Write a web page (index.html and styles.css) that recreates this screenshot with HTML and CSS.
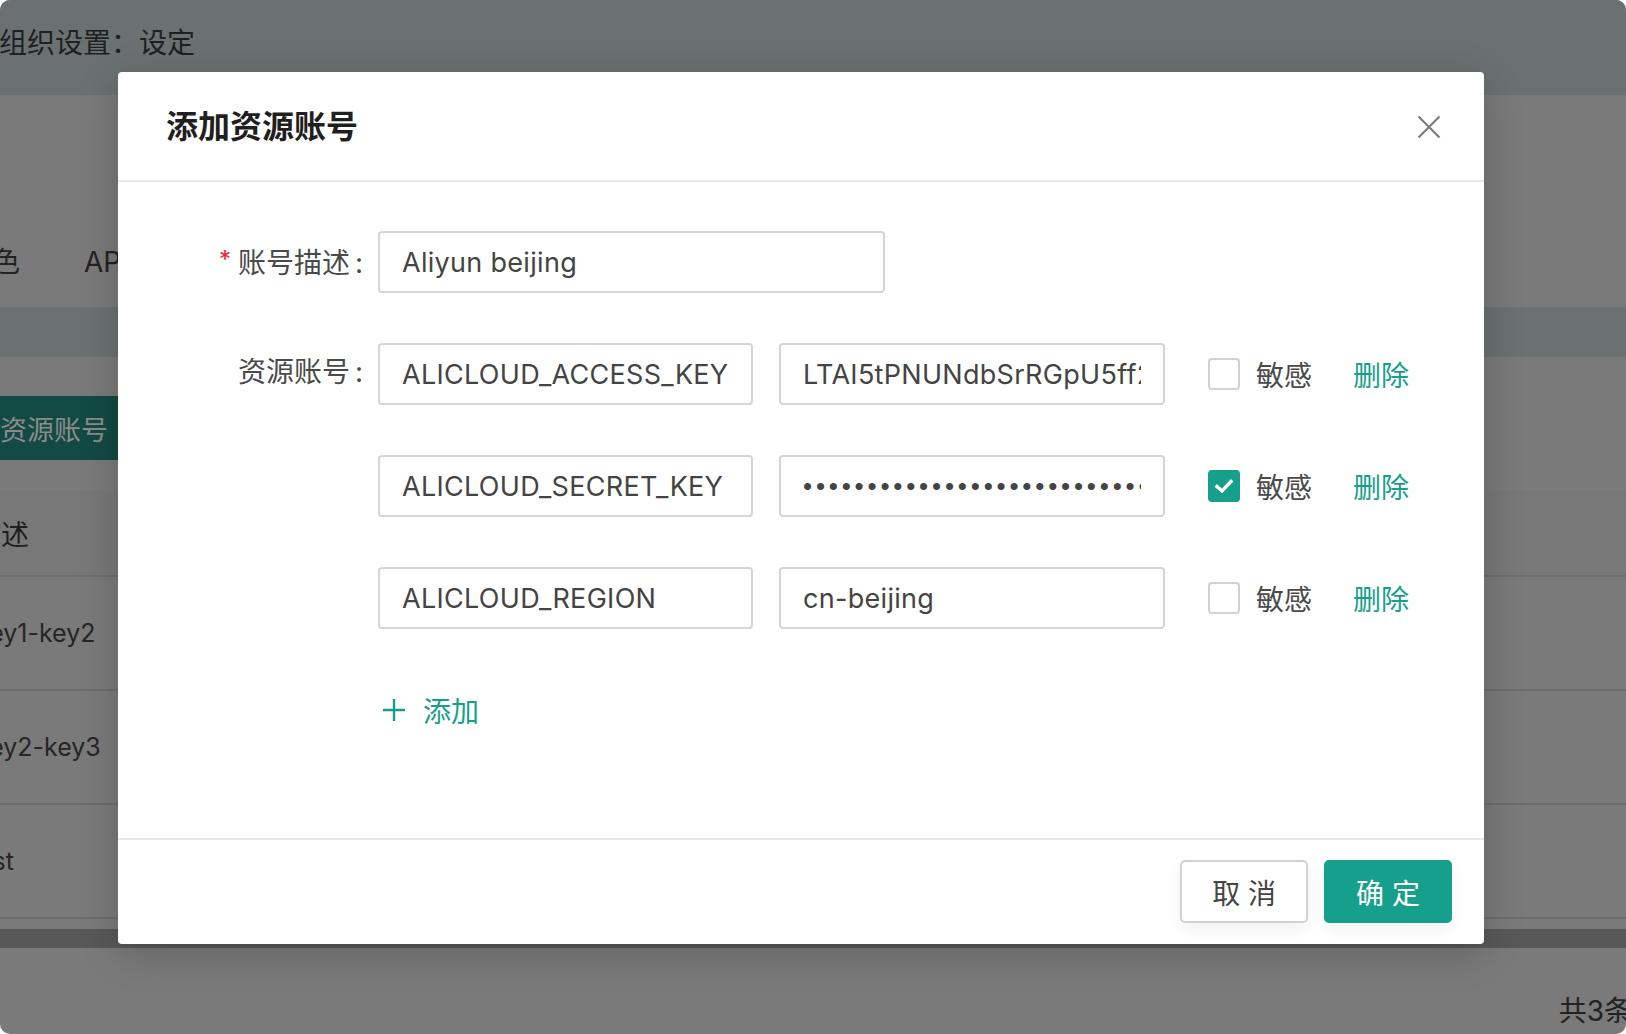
FILE: index.html
```html
<!DOCTYPE html>
<html lang="zh-CN">
<head>
<meta charset="utf-8">
<title>添加资源账号</title>
<link rel="stylesheet" href="styles.css">
</head>
<body>
<div class="app">
  <header class="topbar"><span class="org-title">组织设置：设定</span></header>
  <nav class="tabs"><span class="tab tab-cut">角色</span><span class="tab">API密钥</span></nav>
  <div class="band"></div>
  <div class="toolbar"><span class="bg-btn">资源账号</span></div>
  <div class="table">
    <div class="tr thead"><span class="cell cut-cjk">描述</span></div>
    <div class="tr"><span class="cell cut-k">key1-key2</span></div>
    <div class="tr"><span class="cell cut-k">key2-key3</span></div>
    <div class="tr"><span class="cell cut-te">test</span></div>
  </div>
  <div class="hscroll"></div>
  <div class="pager"><span>共3条</span></div>
</div>

<div class="modal">
  <div class="modal-header">
    <h2 class="modal-title">添加资源账号</h2>
    <button class="close" aria-label="关闭">
      <svg width="24" height="24" viewBox="0 0 24 24"><path d="M1.5 1.5 L22.5 22.5 M22.5 1.5 L1.5 22.5" stroke="#7d7d7d" stroke-width="2.2" fill="none"/></svg>
    </button>
  </div>
  <div class="modal-body">
    <div class="form-row">
      <label class="form-label required">账号描述</label>
      <input class="input input-desc" value="Aliyun beijing">
    </div>
    <div class="form-row">
      <label class="form-label">资源账号</label>
      <div class="kv-list">
        <div class="kv">
          <input class="input input-key" value="ALICLOUD_ACCESS_KEY">
          <input class="input input-val" value="LTAI5tPNUNdbSrRGpU5ff2xKq">
          <span class="check"><span class="box"></span><span>敏感</span></span>
          <span class="link">删除</span>
        </div>
        <div class="kv">
          <input class="input input-key" value="ALICLOUD_SECRET_KEY">
          <input class="input input-val input-pw" type="password" value="abcdefghijklmnopqrstuvwxyz0123456789abcd">
          <span class="check"><span class="box checked"><svg width="22" height="22" viewBox="0 0 22 22"><path d="M4 11.5 L9 16 L18 6.5" stroke="#fff" stroke-width="3.4" fill="none" stroke-linecap="square"/></svg></span><span>敏感</span></span>
          <span class="link">删除</span>
        </div>
        <div class="kv">
          <input class="input input-key" value="ALICLOUD_REGION">
          <input class="input input-val" value="cn-beijing">
          <span class="check"><span class="box"></span><span>敏感</span></span>
          <span class="link">删除</span>
        </div>
      </div>
    </div>
    <div class="form-row">
      <span class="form-spacer"></span>
      <button class="add-btn">
        <svg width="22" height="22" viewBox="0 0 22 22"><path d="M11 0 V22 M0 11 H22" stroke="#16a08b" stroke-width="2.4" fill="none"/></svg>
        <span>添加</span>
      </button>
    </div>
  </div>
  <div class="modal-footer">
    <button class="btn">取 消</button>
    <button class="btn btn-primary">确 定</button>
  </div>
</div>
</body>
</html>
```

FILE: styles.css
```css
* { box-sizing: border-box; }
html, body { margin: 0; padding: 0; }
body {
  position: relative;
  width: 1626px;
  height: 1034px;
  overflow: hidden;
  background: #fff;
  font-family: "Inter", "Noto Sans CJK SC", sans-serif;
}

/* dimmed background page */
.app {
  width: 1626px;
  height: 1034px;
  border-radius: 10px;
  overflow: hidden;
  background: #7a7a7a;
  color: #222;
  font-size: 28px;
}
.topbar {
  height: 95px;
  background: #6b7171;
  padding-top: 22px;
  line-height: 38px;
}
.org-title {
  display: block;
  margin-left: -1px;
  color: #1e2121;
  font-family: "Noto Sans CJK SC", sans-serif;
}
.tabs {
  height: 212px;
  display: flex;
  align-items: flex-end;
  gap: 64px;
  padding-bottom: 25px;
  line-height: 40px;
  color: #232323;
}
.tab-cut { margin-left: -36px; }
.band { height: 50px; background: #6b7171; }
.toolbar { padding-top: 39px; height: 103px; }
.bg-btn {
  display: inline-flex;
  align-items: center;
  height: 64px;
  margin-left: -30px;
  padding: 0 30px;
  background: #134a43;
  color: #8a8c8c;
  font-size: 27px;
  font-family: "Noto Sans CJK SC", sans-serif;
}
.table { margin-top: 30px; }
.tr {
  height: 114px;
  border-bottom: 2px solid #6d6d6d;
  display: flex;
  align-items: center;
  font-size: 25px;
  color: #262626;
}
.thead { height: 87px; background: #787878; font-size: 28px; color: #1f1f1f; }
.cut-cjk { margin-left: -27px; }
.cut-k { margin-left: -24px; }
.cut-te { margin-left: -30px; }
.hscroll { margin-top: 10px; height: 19px; background: #585858; }
.pager {
  display: flex;
  justify-content: flex-end;
  margin-top: 43px;
  margin-right: -6px;
  line-height: 40px;
  color: #222;
}

/* modal */
.modal {
  position: absolute;
  left: 118px;
  top: 72px;
  width: 1366px;
  height: 872px;
  background: #fff;
  border-radius: 4px;
  box-shadow: 0 8px 40px rgba(0, 0, 0, 0.2);
  display: flex;
  flex-direction: column;
}
.modal-header {
  flex: none;
  height: 110px;
  display: flex;
  align-items: center;
  justify-content: space-between;
  padding: 0 43px 0 48px;
  border-bottom: 2px solid #e8e8e8;
}
.modal-title {
  margin: 0 0 4px;
  font-size: 32px;
  line-height: 1;
  font-weight: 600;
  color: #1f1f1f;
  font-family: "Noto Sans CJK SC", sans-serif;
}
.close {
  width: 24px;
  height: 24px;
  padding: 0;
  border: 0;
  background: none;
  display: flex;
  margin-top: 2px;
}
.modal-body {
  flex: 1;
  padding-top: 49px;
  display: flex;
  flex-direction: column;
  gap: 50px;
}
.form-row { display: flex; align-items: flex-start; }
.form-label, .form-spacer {
  flex: none;
  width: 260px;
  padding-right: 15px;
  text-align: right;
  height: 62px;
  line-height: 58px;
  font-size: 28px;
  color: #4a4a4a;
}
.form-label::after { content: ":"; margin-left: 5px; }
.required::before {
  content: "*";
  color: #f5222d;
  margin-right: 7px;
  font-size: 24px;
  vertical-align: 5px;
}
.input {
  height: 62px;
  border: 2px solid #d5d5d5;
  border-radius: 4px;
  padding: 0 22px;
  font-family: "Inter", "Noto Sans CJK SC", sans-serif;
  font-size: 27px;
  letter-spacing: 0.3px;
  color: #444;
  background: #fff;
  outline: none;
}
.input-desc { width: 507px; }
.input-key { width: 375px; }
.input-val { width: 386px; margin-left: 26px; }
.input-pw {
  font-family: "Liberation Sans", sans-serif;
  font-size: 26px;
  letter-spacing: 3.8px;
}
.kv-list { display: flex; flex-direction: column; gap: 50px; }
.kv { display: flex; align-items: center; }
.check {
  display: flex;
  align-items: center;
  gap: 16px;
  margin-left: 43px;
  font-size: 28px;
  color: #4a4a4a;
}
.box {
  width: 32px;
  height: 32px;
  border: 2px solid #d2d2d2;
  border-radius: 4px;
  display: flex;
  align-items: center;
  justify-content: center;
  background: #fff;
}
.box.checked { background: #16a08b; border-color: #16a08b; }
.link { margin-left: 41px; color: #16a08b; font-size: 28px; }
.add-btn {
  display: flex;
  align-items: center;
  gap: 18px;
  height: 62px;
  padding: 0 0 0 5px;
  border: 0;
  background: none;
  color: #16a08b;
  font-size: 28px;
  font-family: "Inter", "Noto Sans CJK SC", sans-serif;
}
.modal-footer {
  flex: none;
  height: 106px;
  border-top: 2px solid #e8e8e8;
  display: flex;
  justify-content: flex-end;
  align-items: flex-start;
  gap: 16px;
  padding: 20px 32px 0 0;
}
.btn {
  height: 63px;
  padding: 0 30px;
  border: 2px solid #d2d2d2;
  border-radius: 5px;
  background: #fff;
  font-size: 28px;
  color: #444;
  font-family: "Inter", "Noto Sans CJK SC", sans-serif;
  box-shadow: 0 6px 16px rgba(0, 0, 0, 0.06);
}
.btn-primary { background: #16a08b; border-color: #16a08b; color: #fff; }
```
